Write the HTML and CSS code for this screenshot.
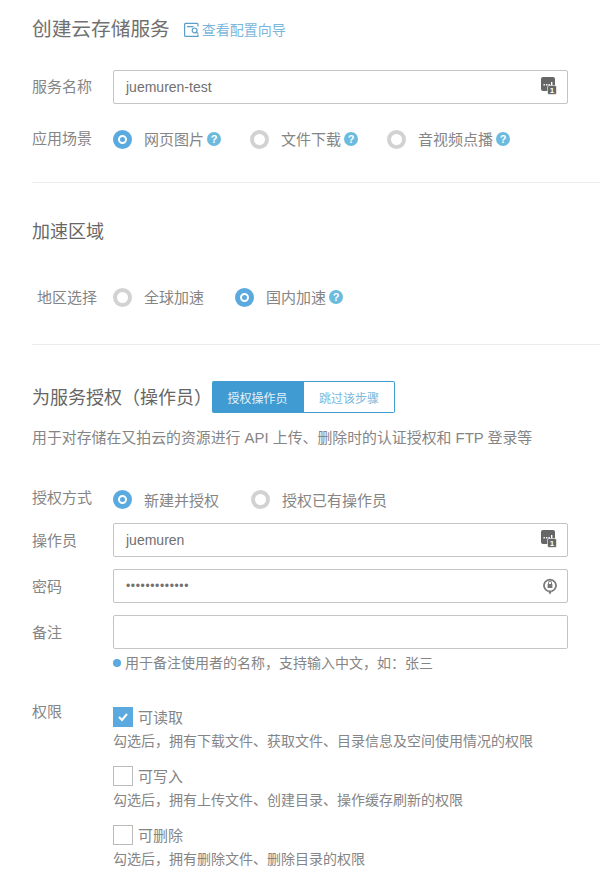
FILE: index.html
```html
<!DOCTYPE html>
<html lang="zh-CN">
<head>
<meta charset="utf-8">
<title>创建云存储服务</title>
<link rel="stylesheet" href="styles.css">
</head>
<body>

<!-- 基本信息 -->
<div class="section section-first">
  <div class="head">
    <h2>创建云存储服务</h2>
    <a class="guide" href="#">
      <svg width="15" height="15" viewBox="0 0 15 15" fill="none" stroke="#5a9fc9" stroke-width="1.2"><path d="M14 4.5V2.4a1 1 0 0 0-1-1H1.6a1 1 0 0 0-1 1v11a1 1 0 0 0 1 1H14v-2"/><circle cx="10.6" cy="8.4" r="2.4"/><path d="M3 4.6h6.5M12.4 10.2l1.8 1.6"/></svg>
      查看配置向导
    </a>
  </div>
  <div class="row row-input">
    <label>服务名称</label>
    <div class="input">juemuren-test
      <svg class="input-icon" width="16" height="18" viewBox="0 0 16 18"><rect x="0" y="0" width="14" height="14" rx="2" fill="#666"/><path d="M2.5 7h1.4v1.4H2.5zM5 7h1.4v1.4H5zM7.5 7h1.4v1.4H7.5zM10 5h1.4v3.4H10z" fill="#fff"/><rect x="6.5" y="8.5" width="9" height="9" rx="1.5" fill="#666" stroke="#fff" stroke-width=".6"/><text x="11" y="16" font-size="8" font-weight="700" fill="#fff" text-anchor="middle" font-family="Liberation Sans">1</text></svg>
    </div>
  </div>
  <div class="row row-radio">
    <label>应用场景</label>
    <div class="options">
      <span class="radio on"></span><span class="opt">网页图片</span><span class="help">?</span>
      <span class="radio gap-a"></span><span class="opt">文件下载</span><span class="help">?</span>
      <span class="radio gap-a"></span><span class="opt">音视频点播</span><span class="help">?</span>
    </div>
  </div>
</div>

<!-- 加速区域 -->
<div class="section section-area">
  <h3>加速区域</h3>
  <div class="row row-area">
    <label>地区选择</label>
    <div class="options">
      <span class="radio"></span><span class="opt">全球加速</span>
      <span class="radio on gap-b"></span><span class="opt">国内加速</span><span class="help">?</span>
    </div>
  </div>
</div>

<!-- 操作员 -->
<div class="section section-auth">
  <div class="head-auth">
    <h3>为服务授权（操作员）</h3>
    <div class="btn-group">
      <button class="btn active">授权操作员</button>
      <button class="btn">跳过该步骤</button>
    </div>
  </div>
  <p class="desc">用于对存储在又拍云的资源进行 API 上传、删除时的认证授权和 FTP 登录等</p>

  <div class="row row-way">
    <label>授权方式</label>
    <div class="options">
      <span class="radio on"></span><span class="opt">新建并授权</span>
      <span class="radio gap-c"></span><span class="opt">授权已有操作员</span>
    </div>
  </div>
  <div class="row row-field">
    <label>操作员</label>
    <div class="input">juemuren
      <svg class="input-icon" width="16" height="18" viewBox="0 0 16 18"><rect x="0" y="0" width="14" height="14" rx="2" fill="#666"/><path d="M2.5 7h1.4v1.4H2.5zM5 7h1.4v1.4H5zM7.5 7h1.4v1.4H7.5zM10 5h1.4v3.4H10z" fill="#fff"/><rect x="6.5" y="8.5" width="9" height="9" rx="1.5" fill="#666" stroke="#fff" stroke-width=".6"/><text x="11" y="16" font-size="8" font-weight="700" fill="#fff" text-anchor="middle" font-family="Liberation Sans">1</text></svg>
    </div>
  </div>
  <div class="row row-field">
    <label>密码</label>
    <div class="input input-pass">•••••••••••••
      <svg class="input-icon" width="14" height="19" viewBox="0 0 14 19" fill="none"><path d="M5 15.2a6 6 0 1 1 4 0" stroke="#777" stroke-width="1.7"/><rect x="4.6" y="8" width="4.8" height="4" rx=".6" fill="#777"/><path d="M5.5 8V6.6a1.5 1.5 0 0 1 3 0V8" stroke="#777"/><path d="M4.6 14.4L7 18.4l2.4-4z" fill="#777"/></svg>
    </div>
  </div>
  <div class="row row-field">
    <label>备注</label>
    <div class="input input-note"></div>
  </div>
  <div class="hint"><span class="dot"></span>用于备注使用者的名称，支持输入中文，如：张三</div>

  <div class="row row-perm">
    <label>权限</label>
    <div class="perms">
      <div class="perm">
        <div class="check-line"><span class="check on"><svg width="12" height="10" viewBox="0 0 12 10" fill="none" stroke="#fff" stroke-width="2"><path d="M2 5l3 3 5-6"/></svg></span><span class="check-text">可读取</span></div>
        <div class="perm-desc">勾选后，拥有下载文件、获取文件、目录信息及空间使用情况的权限</div>
      </div>
      <div class="perm">
        <div class="check-line"><span class="check"></span><span class="check-text">可写入</span></div>
        <div class="perm-desc">勾选后，拥有上传文件、创建目录、操作缓存刷新的权限</div>
      </div>
      <div class="perm">
        <div class="check-line"><span class="check"></span><span class="check-text">可删除</span></div>
        <div class="perm-desc">勾选后，拥有删除文件、删除目录的权限</div>
      </div>
    </div>
  </div>
</div>

</body>
</html>
```

FILE: styles.css
```css
body {
  margin: 0;
  height: 894px;
  overflow: hidden;
  background-color: #ffffff;
  color: #858585;
  font-family: "Liberation Sans", "Noto Sans CJK SC", sans-serif;
  font-size: 14px;
}
h2, h3, p {
  margin: 0;
  font-weight: normal;
}
.section {
  margin-left: 32px;
}
.section-first {
  height: 182px;
  border-bottom: 1px solid #ededed;
}
.section-area {
  height: 161px;
  border-bottom: 1px solid #ededed;
}
.head {
  display: flex;
  align-items: center;
  height: 27px;
  padding-top: 14px;
}
.head h2 {
  font-size: 19.7px;
  color: #707070;
}
.guide {
  display: flex;
  align-items: center;
  gap: 3px;
  margin-left: 14px;
  margin-top: 3px;
  color: #7ab7db;
  text-decoration: none;
}
.row {
  display: flex;
}
.row label {
  width: 81px;
  flex-shrink: 0;
  font-size: 15px;
  color: #858585;
}
.row-input {
  align-items: center;
  margin-top: 29px;
}
.row-input label {
  padding-bottom: 4px;
}
.input {
  position: relative;
  box-sizing: border-box;
  width: 455px;
  height: 34px;
  padding-left: 12px;
  line-height: 33px;
  border: 1px solid #c4c4c4;
  border-radius: 2px;
  color: #707070;
}
.input-icon {
  position: absolute;
  right: 10px;
  top: 6px;
}
.input-pass {
  font-size: 12px;
  letter-spacing: .65px;
}
.row-radio {
  align-items: center;
  margin-top: 23px;
}
.row-radio label {
  padding-bottom: 4px;
}
.options {
  display: flex;
  align-items: center;
  height: 20px;
}
.radio {
  box-sizing: border-box;
  flex-shrink: 0;
  display: flex;
  align-items: center;
  justify-content: center;
  width: 19px;
  height: 19px;
  border: 4px solid #d2d2d2;
  border-radius: 50%;
  background-color: #fff;
}
.radio.on {
  border: 5px solid #5aa9df;
}
.radio.on::after {
  content: "";
  width: 5px;
  height: 5px;
  border-radius: 50%;
  background-color: #5aa9df;
}
.opt {
  margin-left: 12px;
  padding-bottom: 2px;
  font-size: 15px;
  color: #858585;
}
.help {
  display: inline-block;
  width: 14px;
  height: 14px;
  margin-left: 3px;
  margin-bottom: 2px;
  border-radius: 50%;
  background-color: #6bbbdf;
  color: #fff;
  font-size: 11px;
  font-weight: bold;
  line-height: 14px;
  text-align: center;
}
.gap-a {
  margin-left: 29px;
}
.gap-b {
  margin-left: 31px;
}
.gap-c {
  margin-left: 32px;
}
.section-area h3 {
  padding-top: 39px;
  font-size: 18px;
  line-height: 21px;
  color: #666;
}
.row-area {
  align-items: center;
  margin-top: 43px;
}
.row-area label {
  padding-left: 5px;
  padding-bottom: 2px;
  width: 76px;
}
.section-auth {
  padding-top: 36px;
}
.head-auth {
  display: flex;
  align-items: center;
}
.head-auth h3 {
  font-size: 18px;
  width: 180px;
  padding-bottom: 2px;
  white-space: nowrap;
  color: #666;
}
.btn-group {
  display: flex;
  height: 32px;
}
.btn {
  box-sizing: border-box;
  width: 91px;
  padding: 0;
  background-color: #fff;
  border: 1px solid #3f9bd2;
  border-left: none;
  border-radius: 0 2px 2px 0;
  color: #7bb8dc;
  font-family: inherit;
  font-size: 12px;
}
.btn.active {
  width: 92px;
  background-color: #3f9bd2;
  border-radius: 2px 0 0 2px;
  color: #e6f2f9;
}
.desc {
  margin-top: 15px;
  font-size: 14.9px;
  line-height: 20px;
  white-space: nowrap;
}
.row-way {
  margin-top: 41px;
}
.row-way label {
  margin-top: -3px;
}
.row-way .opt {
  padding-bottom: 0;
}
.row-field {
  margin-top: 12px;
  align-items: flex-start;
}
.row-way + .row-field {
  margin-top: 14px;
}
.row-field label {
  height: 34px;
  line-height: 35px;
}
.input-note {
  height: 34px;
}
.hint {
  display: flex;
  align-items: center;
  margin: 4px 0 0 81px;
  line-height: 20px;
}
.dot {
  width: 8px;
  height: 8px;
  margin-right: 4px;
  border-radius: 50%;
  background-color: #5aa9df;
}
.row-perm {
  margin-top: 34px;
}
.row-perm label {
  margin-top: -7px;
}
.perm {
  height: 59px;
}
.check-line {
  display: flex;
  align-items: center;
  height: 20px;
  font-size: 15px;
}
.check-text {
  padding-bottom: 2px;
}
.check {
  box-sizing: border-box;
  display: flex;
  align-items: center;
  justify-content: center;
  width: 20px;
  height: 20px;
  margin-right: 5px;
  border: 1px solid #bbb;
}
.check.on {
  background-color: #5aa9df;
  border-color: #5aa9df;
}
.perm-desc {
  margin-top: 4px;
  line-height: 20px;
  white-space: nowrap;
}
```
